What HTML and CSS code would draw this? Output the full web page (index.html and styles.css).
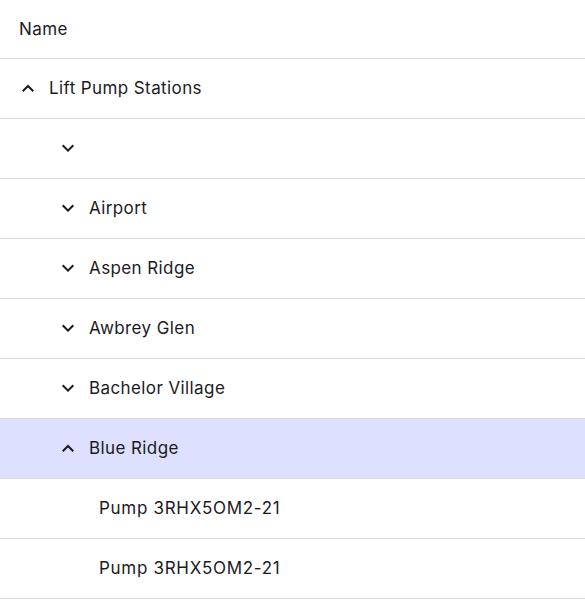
FILE: index.html
```html
<!DOCTYPE html>
<html>
<head>
<meta charset="utf-8">
<link rel="stylesheet" href="styles.css">
</head>
<body>
<div class="tree">
  <div class="header">Name</div>
  <div class="row l1"><svg class="chev" viewBox="0 0 24 24"><path d="M12 8.59 6 14.59 7.41 16 12 11.41 16.59 16 18 14.59z"/></svg><span>Lift Pump Stations</span></div>
  <div class="row l2"><svg class="chev" viewBox="0 0 24 24"><path d="M16.59 8.59 12 13.17 7.41 8.59 6 10l6 6 6-6z"/></svg><span></span></div>
  <div class="row l2"><svg class="chev" viewBox="0 0 24 24"><path d="M16.59 8.59 12 13.17 7.41 8.59 6 10l6 6 6-6z"/></svg><span>Airport</span></div>
  <div class="row l2"><svg class="chev" viewBox="0 0 24 24"><path d="M16.59 8.59 12 13.17 7.41 8.59 6 10l6 6 6-6z"/></svg><span>Aspen Ridge</span></div>
  <div class="row l2"><svg class="chev" viewBox="0 0 24 24"><path d="M16.59 8.59 12 13.17 7.41 8.59 6 10l6 6 6-6z"/></svg><span>Awbrey Glen</span></div>
  <div class="row l2"><svg class="chev" viewBox="0 0 24 24"><path d="M16.59 8.59 12 13.17 7.41 8.59 6 10l6 6 6-6z"/></svg><span>Bachelor Village</span></div>
  <div class="row l2 selected"><svg class="chev" viewBox="0 0 24 24"><path d="M12 8.59 6 14.59 7.41 16 12 11.41 16.59 16 18 14.59z"/></svg><span>Blue Ridge</span></div>
  <div class="row l3"><span class="code">Pump 3RHX5OM2-21</span></div>
  <div class="row l3"><span class="code">Pump 3RHX5OM2-21</span></div>
</div>
</body>
</html>
```
FILE: styles.css
```css
html, body {
  margin: 0;
  padding: 0;
  background: #fff;
}
body {
  font-family: Inter, "Noto Sans", sans-serif;
  font-size: 17px;
  letter-spacing: 0.4px;
  color: #1b1b1f;
}
.tree {
  display: flex;
  flex-direction: column;
}
.header {
  height: 57px;
  padding-bottom: 1px;
  display: flex;
  align-items: center;
  padding-left: 19px;
  border-bottom: 1px solid #dadada;
}
.row {
  height: 58px;
  padding-bottom: 1px;
  display: flex;
  align-items: center;
  border-bottom: 1px solid #dadada;
}
.row.selected {
  background: #dde1ff;
}
.chev {
  width: 24px;
  height: 24px;
  fill: #1b1b1f;
  flex: none;
  margin-right: 9px;
}
.code {
  letter-spacing: 0.7px;
}
.l1 { padding-left: 16px; }
.l2 { padding-left: 56px; }
.l3 { padding-left: 99px; }
```
